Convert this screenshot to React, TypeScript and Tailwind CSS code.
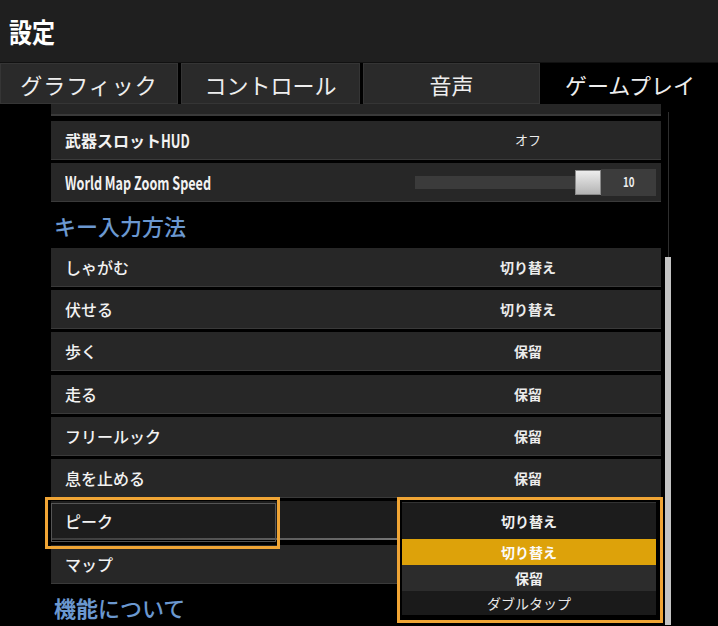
import React from "react";

const JP = "'Noto Sans CJK JP', 'Noto Sans', sans-serif";

type Row = { label: string; value: string; extra?: string };

const keyRows: Row[] = [
  { label: "しゃがむ", value: "切り替え" },
  { label: "伏せる", value: "切り替え" },
  { label: "歩く", value: "保留", extra: "mb-[1px]" },
  { label: "走る", value: "保留" },
  { label: "フリールック", value: "保留" },
  { label: "息を止める", value: "保留" },
];

function SettingRow({ label, value, extra }: Row) {
  return (
    <div className={"h-[39px] shrink-0 flex items-center bg-[#272727] border-b border-[#3a3a3a] " + (extra ?? "")}>
      <div className="flex-1 pl-[14px] text-[16px] font-medium text-[#f2f2f2]">{label}</div>
      <div className="w-[256px] mr-[5px] text-center text-[14px] font-bold text-[#ececec]">{value}</div>
    </div>
  );
}

export default function App() {
  return (
    <div className="w-[718px] h-[626px] bg-black overflow-hidden relative" style={{ fontFamily: JP }}>
      {/* header */}
      <div className="h-[63px] bg-[#1f1f1f] flex items-center pl-[9px] border-b border-[#111]">
        <span className="text-[23px] font-bold text-white leading-none inline-block scale-y-[1.18] origin-center">設定</span>
      </div>
      {/* tabs */}
      <div className="h-[41px] flex text-[22px] text-[#eeeeee] leading-none">
        <div className="w-[178px] flex items-center justify-center bg-[#2a2a2a] border border-[#353535] tracking-[1px]">グラフィック</div>
        <div className="w-[3px]" />
        <div className="w-[179px] flex items-center justify-center bg-[#2a2a2a] border border-[#353535]">コントロール</div>
        <div className="w-[3px]" />
        <div className="w-[177px] flex items-center justify-center bg-[#2a2a2a] border border-[#353535]">音声</div>
        <div className="w-[2px]" />
        <div className="flex-1 flex items-center justify-center bg-black">ゲームプレイ</div>
      </div>
      {/* body */}
      <div className="flex h-[521px] pl-[51px] overflow-hidden">
        <div className="w-[610px] flex flex-col overflow-hidden">
          <div className="h-[12px] shrink-0 bg-[#262626] border-b-2 border-[#3a3a3a]" />
          <div className="h-[5px] shrink-0" />
          <div className="h-[39px] shrink-0 flex items-center bg-[#272727] border-b border-[#3a3a3a]">
            <div className="flex-1 pl-[14px] text-[16px] font-bold text-[#f2f2f2] flex items-center">
              武器スロット
              <span className="text-[18px] inline-block scale-x-[0.72] origin-left">HUD</span>
            </div>
            <div className="w-[256px] mr-[5px] text-center text-[13px] text-[#ececec]">オフ</div>
          </div>
          <div className="h-[3px] shrink-0" />
          <div className="h-[39px] shrink-0 flex items-center bg-[#272727] border-b border-[#3a3a3a]">
            <div className="flex-1 pl-[14px] text-[#f2f2f2]">
              <span className="inline-block text-[18px] font-bold whitespace-nowrap scale-x-[0.7] origin-left">World Map Zoom Speed</span>
            </div>
            <div className="flex items-center mr-[5px]">
              <div className="w-[160px] h-[13px] bg-[#3b3b3b]" />
              <div className="w-[26px] h-[25px] bg-gradient-to-b from-[#ededed] to-[#b4b4b4] border border-[#8a8a8a]" />
              <div className="w-[55px] h-[27px] bg-[#3c3c3c] flex items-center justify-center text-[#eeeeee]">
                <span className="inline-block text-[13px] font-bold scale-x-[0.75]">10</span>
              </div>
            </div>
          </div>
          <div className="h-[46px] shrink-0 flex items-center pl-[3px] text-[22px] font-medium text-[#6b98d0]">キー入力方法</div>
          <div className="flex flex-col gap-[3px] shrink-0">
            {keyRows.map((r) => (
              <SettingRow key={r.label} {...r} />
            ))}
            <div className="h-[39px] shrink-0 flex items-center bg-[#1d1d1d] relative mb-[2px]">
              <div className="flex-1 pl-[14px] text-[16px] font-medium text-[#f2f2f2]">ピーク</div>
              <div className="absolute left-0 bottom-0 w-full h-[2px] bg-gradient-to-r from-[#3a3a3a] via-[#6a6a6a] to-[#d0d0d0]" />
            </div>
            <SettingRow label="マップ" value="" />
          </div>
          <div className="h-[46px] shrink-0 flex items-center pl-[3px] text-[22px] font-medium text-[#6b98d0]">
            <span className="font-bold">機能</span>について
          </div>
        </div>
        {/* scrollbar */}
        <div className="ml-[4px] w-[6px] flex flex-col">
          <div className="h-[153px] shrink-0 flex justify-center pt-[8px]">
            <div className="w-[1px] bg-[#2e2e2e]" />
          </div>
          <div className="flex-1 bg-[#c4c4c4]" />
        </div>
      </div>

      {/* peek row annotation overlay */}
      <div className="absolute left-[45px] top-[497px] w-[235px] h-[52px] border-[3px] border-[#f0a535]">
        <div className="absolute left-[3px] top-[3px] right-[1px] bottom-[4px] border border-[#555555]" />
      </div>

      {/* dropdown overlay */}
      <div className="absolute left-[397px] top-[497px] w-[266px] h-[126px] border-[3px] border-[#f0a535] bg-black">
        <div className="absolute left-[2px] top-[2px] w-[254px] flex flex-col">
          <div className="h-[37px] bg-[#1c1c1c] border-t border-[#333] flex items-center justify-center text-[14px] font-bold text-[#f0f0f0]">切り替え</div>
          <div className="h-[26px] bg-[#dda20a] flex items-center justify-center text-[14px] font-bold text-[#fbfbfb]">切り替え</div>
          <div className="h-[26px] bg-[#2c2c2c] flex items-center justify-center text-[14px] font-bold text-[#f0f0f0]">保留</div>
          <div className="h-[24px] bg-[#1a1a1a] flex items-center justify-center text-[14px] text-[#e8e8e8]">ダブルタップ</div>
        </div>
      </div>
    </div>
  );
}
